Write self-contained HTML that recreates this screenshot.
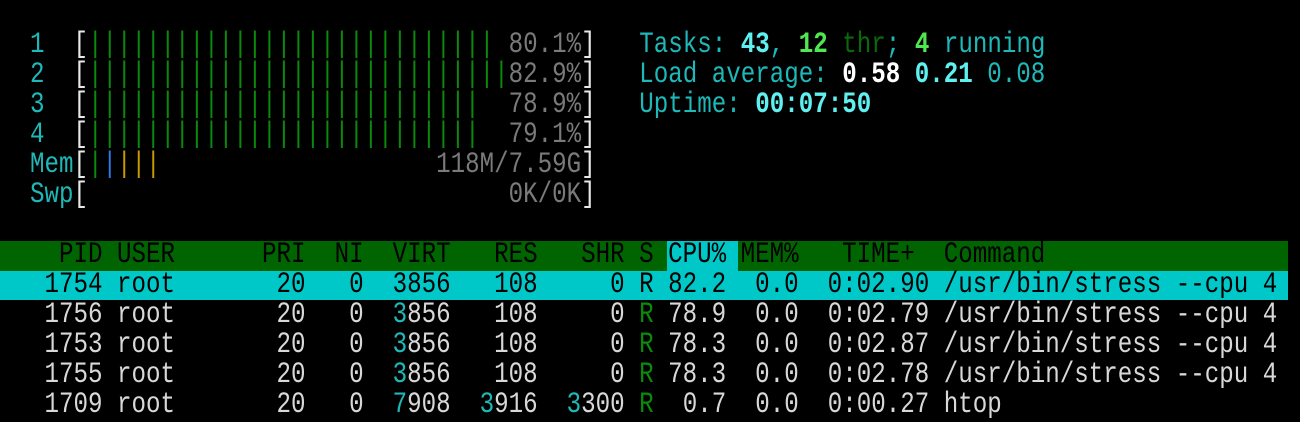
<!DOCTYPE html>
<html><head><meta charset="utf-8"><style>
html,body{margin:0;padding:0;background:#000;width:1300px;height:422px;overflow:hidden;}
.bg{position:absolute;}
#txt{position:absolute;left:29.5px;top:30px;transform:scaleX(0.8056);transform-origin:0 0;}
pre{margin:0;font-family:"Liberation Mono",monospace;font-size:30px;line-height:30px;height:30px;color:#d8d8d8;white-space:pre;}
.c{color:#1fb8b8}.bc{color:#60f0f0;font-weight:bold}.g{color:#0a8a0a}.bg2{color:#50e850;font-weight:bold}
.dg{color:#0a6a0a}.w{color:#fff;font-weight:bold}.gr{color:#7a7a7a}.br{color:#e8e8e8}
.bl{color:#2a7ae0}.y{color:#c89a00}.k{color:#000}.hd{color:#000}.rg{color:#0a8a0a}
</style></head><body>
<div class="bg" style="left:0;top:241px;width:1288px;height:30px;background:#006400"></div>
<div class="bg" style="left:667px;top:241px;width:71px;height:30px;background:#00c8c8"></div>
<div class="bg" style="left:0;top:271px;width:1288px;height:29px;background:#00c8c8"></div>
<div id="txt">
<pre><span class="c">1</span>  <span class="br">[</span><span class="g">||||||||||||||||||||||||||||</span> <span class="gr">80.1%</span><span class="br">]</span>   <span class="c">Tasks: </span><span class="bc">43</span><span class="c">, </span><span class="bg2">12</span> <span class="dg">thr</span><span class="c">; </span><span class="bg2">4</span> <span class="c">running</span></pre>
<pre><span class="c">2</span>  <span class="br">[</span><span class="g">|||||||||||||||||||||||||||||</span><span class="gr">82.9%</span><span class="br">]</span>   <span class="c">Load average: </span><span class="w">0.58 </span><span class="bc">0.21 </span><span class="c">0.08</span></pre>
<pre><span class="c">3</span>  <span class="br">[</span><span class="g">|||||||||||||||||||||||||||</span>  <span class="gr">78.9%</span><span class="br">]</span>   <span class="c">Uptime: </span><span class="bc">00:07:50</span></pre>
<pre><span class="c">4</span>  <span class="br">[</span><span class="g">|||||||||||||||||||||||||||</span>  <span class="gr">79.1%</span><span class="br">]</span></pre>
<pre><span class="c">Mem</span><span class="br">[</span><span class="g">|</span><span class="bl">|</span><span class="y">|||</span>                   <span class="gr">118M/7.59G</span><span class="br">]</span></pre>
<pre><span class="c">Swp</span><span class="br">[</span>                             <span class="gr">0K/0K</span><span class="br">]</span></pre>
<pre> </pre>
<pre class="hd">  PID USER      PRI  NI  VIRT   RES   SHR S CPU% MEM%   TIME+  Command</pre>
<pre class="k"> 1754 root       20   0  3856   108     0 R 82.2  0.0  0:02.90 /usr/bin/stress --cpu 4</pre>
<pre> 1756 root       20   0  <span class="c">3</span>856   108     0 <span class="rg">R</span> 78.9  0.0  0:02.79 /usr/bin/stress --cpu 4</pre>
<pre> 1753 root       20   0  <span class="c">3</span>856   108     0 <span class="rg">R</span> 78.3  0.0  0:02.87 /usr/bin/stress --cpu 4</pre>
<pre> 1755 root       20   0  <span class="c">3</span>856   108     0 <span class="rg">R</span> 78.3  0.0  0:02.78 /usr/bin/stress --cpu 4</pre>
<pre> 1709 root       20   0  <span class="c">7</span>908  <span class="c">3</span>916  <span class="c">3</span>300 <span class="rg">R</span>  0.7  0.0  0:00.27 htop</pre>
</div>
</body></html>
